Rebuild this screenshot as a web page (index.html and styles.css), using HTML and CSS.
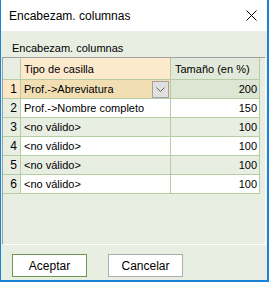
FILE: index.html
```html
<!DOCTYPE html>
<html lang="es">

<head>
    <meta charset="UTF-8">
    <meta name="viewport" content="width=device-width, initial-scale=1.0">
    <title>Encabezam. columnas</title>
    <link rel="stylesheet" href="styles.css">
</head>

<body>
    <div class="window">
        <!--title bar with close button-->
        <div class="titlebar">
            <span class="title">Encabezam. columnas</span>
            <svg class="close" width="11" height="11" viewBox="0 0 11 11">
                <path d="M0.5 0.5 L10.5 10.5 M10.5 0.5 L0.5 10.5" stroke="#000" stroke-width="1" fill="none" />
            </svg>
        </div>

        <div class="content">
            <div class="caption">Encabezam. columnas</div>

            <div class="panel">
                <div class="grid">
                    <div class="cell rh head"></div>
                    <div class="cell head sel">Tipo de casilla</div>
                    <div class="cell head">Tamaño (en %)</div>

                    <div class="cell rh cur">1</div>
                    <div class="cell combo">
                        <span>Prof.-&gt;Abreviatura</span>
                        <span class="drop">
                            <svg width="9" height="5" viewBox="0 0 9 5">
                                <path d="M0.5 0.5 L4.5 4.5 L8.5 0.5" stroke="#606060" stroke-width="1" fill="none" />
                            </svg>
                        </span>
                    </div>
                    <div class="cell num curnum">200</div>

                    <div class="cell rh">2</div>
                    <div class="cell">Prof.-&gt;Nombre completo</div>
                    <div class="cell num">150</div>

                    <div class="cell rh">3</div>
                    <div class="cell alt">&lt;no válido&gt;</div>
                    <div class="cell num alt">100</div>

                    <div class="cell rh">4</div>
                    <div class="cell">&lt;no válido&gt;</div>
                    <div class="cell num">100</div>

                    <div class="cell rh">5</div>
                    <div class="cell alt">&lt;no válido&gt;</div>
                    <div class="cell num alt">100</div>

                    <div class="cell rh">6</div>
                    <div class="cell">&lt;no válido&gt;</div>
                    <div class="cell num">100</div>
                </div>
            </div>

            <div class="buttons">
                <button class="btn default">Aceptar</button>
                <button class="btn">Cancelar</button>
            </div>
        </div>
    </div>
</body>

</html>
```

FILE: styles.css
```css
html,
body {
    margin: 0;
    padding: 0;
    background: #fff;
}

.window {
    width: 269px;
    height: 282px;
    box-sizing: border-box;
    border-left: 1px solid #1883d7;
    border-right: 2px solid #1883d7;
    border-bottom: 2px solid #1883d7;
    display: flex;
    flex-direction: column;
    font-family: "Liberation Sans", Arial, sans-serif;
    color: #000;
}

.titlebar {
    height: 31px;
    flex: none;
    background: #fff;
    display: flex;
    align-items: center;
    justify-content: space-between;
    padding: 0 10px 0 8px;
}

.title {
    font-size: 12px;
}

.close {
    display: block;
}

.content {
    flex: 1;
    background: #e9eee3;
    display: flex;
    flex-direction: column;
}

.caption {
    font-size: 11px;
    line-height: 13px;
    padding: 11px 0 0 11px;
    margin-bottom: 2px;
}

.panel {
    height: 188px;
    margin: 0 1px;
    box-sizing: border-box;
    border-top: 1px solid #a0a0a0;
    border-left: 1px solid #a0a0a0;
    border-bottom: 1px solid #fff;
    border-right: 1px solid #fff;
}

.grid {
    display: grid;
    grid-template-columns: 18px 150px 89px;
    grid-template-rows: 22px repeat(6, 19px);
    font-size: 11px;
}

.cell {
    box-sizing: border-box;
    border-right: 1px solid #b6cca2;
    border-bottom: 1px solid #b6cca2;
    background: #fff;
    padding: 0 3px;
    display: flex;
    align-items: center;
    white-space: nowrap;
    overflow: hidden;
}

.head {
    background: #e2e9da;
    padding-left: 4px;
}

.head.sel {
    background: #fde9cb;
    padding-left: 3px;
}

.rh {
    background: #e9eee3;
    justify-content: flex-end;
    padding: 0 3px 0 0;
    font-size: 12px;
}

.rh.head {
    background: #e9eee3;
}

.rh.cur {
    background: #fde6c6;
}

.alt {
    background: #e9eee3;
}

.num {
    justify-content: flex-end;
    padding-right: 2px;
}

.curnum {
    background: #dce6d2;
}

.combo {
    background: #f1dfb3;
    justify-content: space-between;
    padding-right: 1px;
}

.drop {
    width: 15px;
    height: 15px;
    border: 1px solid #a3a3a3;
    background: #e0e0e0;
    display: flex;
    align-items: center;
    justify-content: center;
}

.drop svg {
    display: block;
}

.buttons {
    display: flex;
    gap: 21px;
    padding: 9px 0 0 11px;
}

.btn {
    width: 75px;
    height: 23px;
    margin: 0;
    padding: 0;
    background: #fff;
    border: 1px solid #adadad;
    font-family: "Liberation Sans", Arial, sans-serif;
    font-size: 12px;
    color: #000;
}

.btn.default {
    border-color: #6f9650;
}
```
